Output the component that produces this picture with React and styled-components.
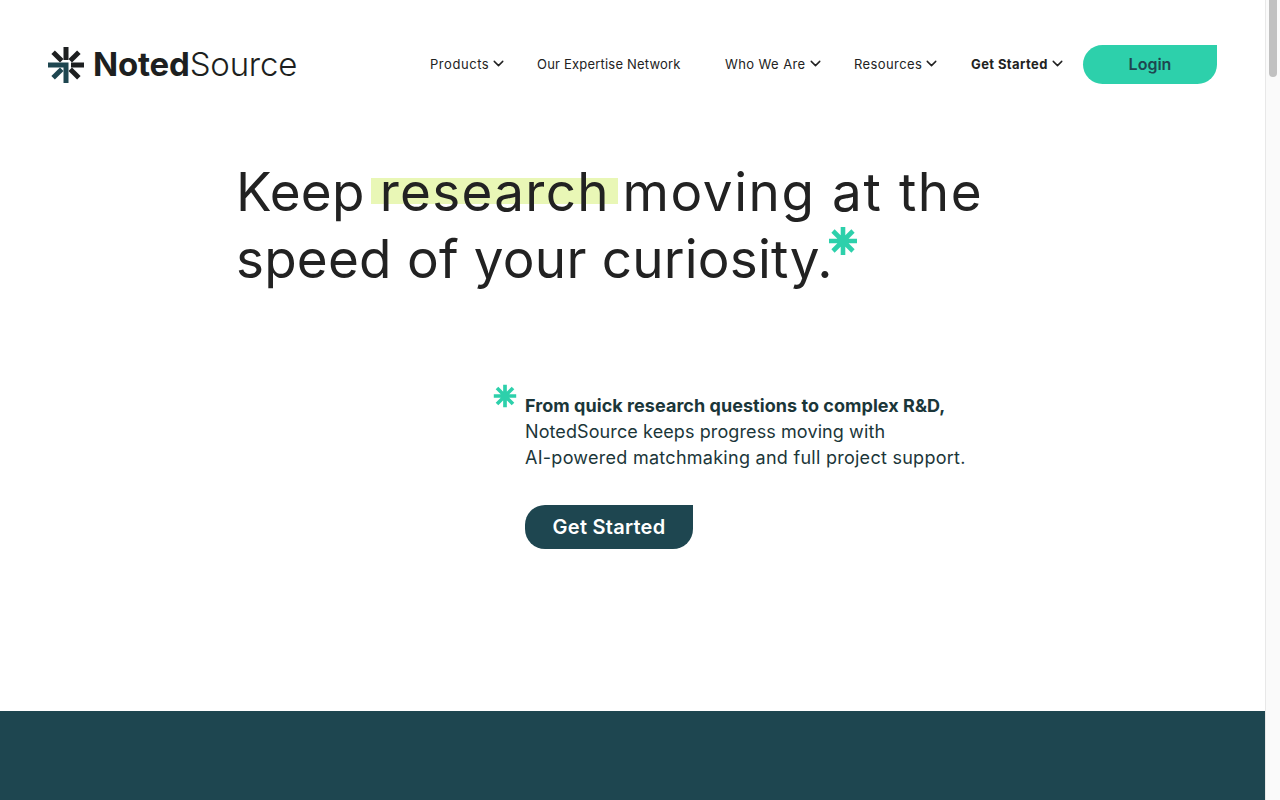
import React from "react";
import styled, { createGlobalStyle } from "styled-components";
import { ChevronDown } from "lucide-react";

const GlobalStyle = createGlobalStyle`
  html, body {
    margin: 0;
    padding: 0;
    height: 100%;
    overflow: hidden;
    background: #ffffff;
  }
  body {
    font-family: "Inter", "Noto Sans", sans-serif;
    color: #222222;
  }
`;

const Star = ({ size, className }) => (
  <svg className={className} width={size} height={size} viewBox="0 0 30 30" fill="none" stroke="#2dd0ab" strokeWidth="4.6">
    <path d="M15 1v28M1 15h28M5 5l20 20M25 5L5 25" />
  </svg>
);

const Logo = () => (
  <svg width="36" height="36" viewBox="0 0 36 36">
    <g fill="#1d1f20">
      <rect x="15.5" y="0" width="5" height="13" />
      <path d="M3.4 6.9l3.5-3.5 8.6 8.6-3.5 3.5z" />
      <path d="M32.6 6.9l-3.5-3.5-8.6 8.6 3.5 3.5z" />
      <rect x="23" y="15.5" width="13" height="5" />
      <path d="M32.6 29.100l-3.500 3.500-8.600-8.600 3.500-3.500z" />
    </g>
    <g fill="#1e4650">
      <path d="M0 15.500h20.500v20.500h-5V20.500H0z" />
      <path d="M3.400 29.100l8.600-8.600 3.500 3.500-8.600 8.600z" />
    </g>
  </svg>
);

const navItems = [
  { label: "Products", menu: true, width: 107, tracking: 0.55 },
  { label: "Our Expertise Network", width: 188, tracking: 0.2 },
  { label: "Who We Are", menu: true, width: 129 },
  { label: "Resources", menu: true, width: 117 },
  { label: "Get Started", menu: true, strong: true, width: 112 },
];

export default function App() {
  return (
    <Frame>
      <GlobalStyle />
      <Page>
        <Header>
          <Brand>
            <Logo />
            <Wordmark>
              <b>Noted</b>Source
            </Wordmark>
          </Brand>
          <Nav>
            {navItems.map((item) => (
              <NavItem key={item.label} $strong={item.strong} $width={item.width} $tracking={item.tracking}>
                {item.label}
                {item.menu && <ChevronDown size={17} strokeWidth={2.1} color="#222222" />}
              </NavItem>
            ))}
            <LoginButton>Login</LoginButton>
          </Nav>
        </Header>
        <Hero>
          <Headline>
            <HeadWords $tracking={0.2}>Keep </HeadWords>
            <Mark>research</Mark>
            <HeadWords $tracking={1.6}> moving at the</HeadWords>
            <br />
            <HeadWords $tracking={0.22}>speed of your curiosity.</HeadWords>
            <HeadlineStar size={30} />
          </Headline>
        </Hero>
        <Pitch>
          <PitchStar size={24} />
          <PitchBody>
            <PitchText>
              <PitchLine $tracking={0.05}>
                <strong>From quick research questions to complex R&amp;D,</strong>
              </PitchLine>
              <PitchLine $tracking={0.1}>NotedSource keeps progress moving with</PitchLine>
              <PitchLine $tracking={0.27}>AI-powered matchmaking and full project support.</PitchLine>
            </PitchText>
            <CtaButton>Get Started</CtaButton>
          </PitchBody>
        </Pitch>
        <DarkBand />
      </Page>
      <Scrollbar>
        <ScrollThumb />
      </Scrollbar>
    </Frame>
  );
}

const Frame = styled.div`
  display: flex;
  width: 1280px;
  height: 800px;
  overflow: hidden;
`;

const Page = styled.main`
  display: flex;
  flex-direction: column;
  width: 1265px;
  height: 800px;
`;

const Header = styled.header`
  display: flex;
  align-items: center;
  justify-content: space-between;
  height: 39px;
  padding: 45px 48px 0;
`;

const Brand = styled.div`
  display: flex;
  align-items: center;
  gap: 9px;
`;

const Wordmark = styled.div`
  padding-bottom: 2px;
  font-size: 33px;
  font-weight: 300;
  letter-spacing: -0.2px;
  color: #1d1f20;

  b {
    font-weight: 700;
  }
`;

const Nav = styled.nav`
  display: flex;
  align-items: center;
`;

const NavItem = styled.a`
  display: flex;
  align-items: center;
  gap: 1px;
  width: ${(p) => p.$width}px;
  padding-bottom: 2px;
  font-size: 13px;
  font-weight: ${(p) => (p.$strong ? 700 : 400)};
  letter-spacing: ${(p) => p.$tracking ?? 0.4}px;
  color: #222222;
  white-space: nowrap;
`;

const LoginButton = styled.button`
  width: 134px;
  height: 39px;
  padding: 0 0 2px;
  border: 0;
  border-radius: 20px 0 20px 20px;
  background: #2dd0ab;
  color: #1e4650;
  font-family: inherit;
  font-size: 16px;
  font-weight: 600;
`;

const Hero = styled.section`
  padding: 75px 0 0 236px;
`;

const Headline = styled.h1`
  margin: 0;
  font-size: 53px;
  font-weight: 400;
  line-height: 67px;
  color: #222222;
  white-space: pre;
`;

const HeadWords = styled.span`
  letter-spacing: ${(p) => p.$tracking}px;
`;

const Mark = styled.span`
  padding: 0 8px 0 9px;
  margin: 0 -12px 0 -9px;
  letter-spacing: 1.3px;
  background: linear-gradient(#e9f7b6, #e9f7b6) no-repeat 0 18px / 100% 26px;
`;

const HeadlineStar = styled(Star)`
  margin-left: -5px;
  vertical-align: 22px;
`;

const Pitch = styled.section`
  display: flex;
  gap: 8px;
  padding: 92px 0 0 493px;
`;

const PitchStar = styled(Star)`
  flex: none;
  margin-top: -1px;
`;

const PitchBody = styled.div`
  display: flex;
  flex-direction: column;
  align-items: flex-start;
  padding-top: 8px;
`;

const PitchText = styled.p`
  margin: 0;
  font-size: 18px;
  line-height: 26px;
  color: #1b3639;
  white-space: nowrap;

  strong {
    font-weight: 700;
  }
`;

const PitchLine = styled.span`
  display: block;
  letter-spacing: ${(p) => p.$tracking}px;
`;

const CtaButton = styled.button`
  width: 168px;
  height: 44px;
  margin-top: 34px;
  border: 0;
  border-radius: 20px 0 20px 20px;
  background: #1e4650;
  color: #ffffff;
  font-family: inherit;
  font-size: 20px;
  font-weight: 600;
  letter-spacing: 0.25px;
`;

const DarkBand = styled.div`
  flex: 1;
  margin-top: 162px;
  background: #1e4650;
`;

const Scrollbar = styled.div`
  flex: none;
  width: 15px;
  height: 800px;
  box-sizing: border-box;
  border-left: 1px solid #e8e8e8;
  background: #fafafa;
`;

const ScrollThumb = styled.div`
  width: 8px;
  height: 77px;
  margin-left: 3px;
  border-radius: 0 0 4px 4px;
  background: #c1c1c1;
`;
